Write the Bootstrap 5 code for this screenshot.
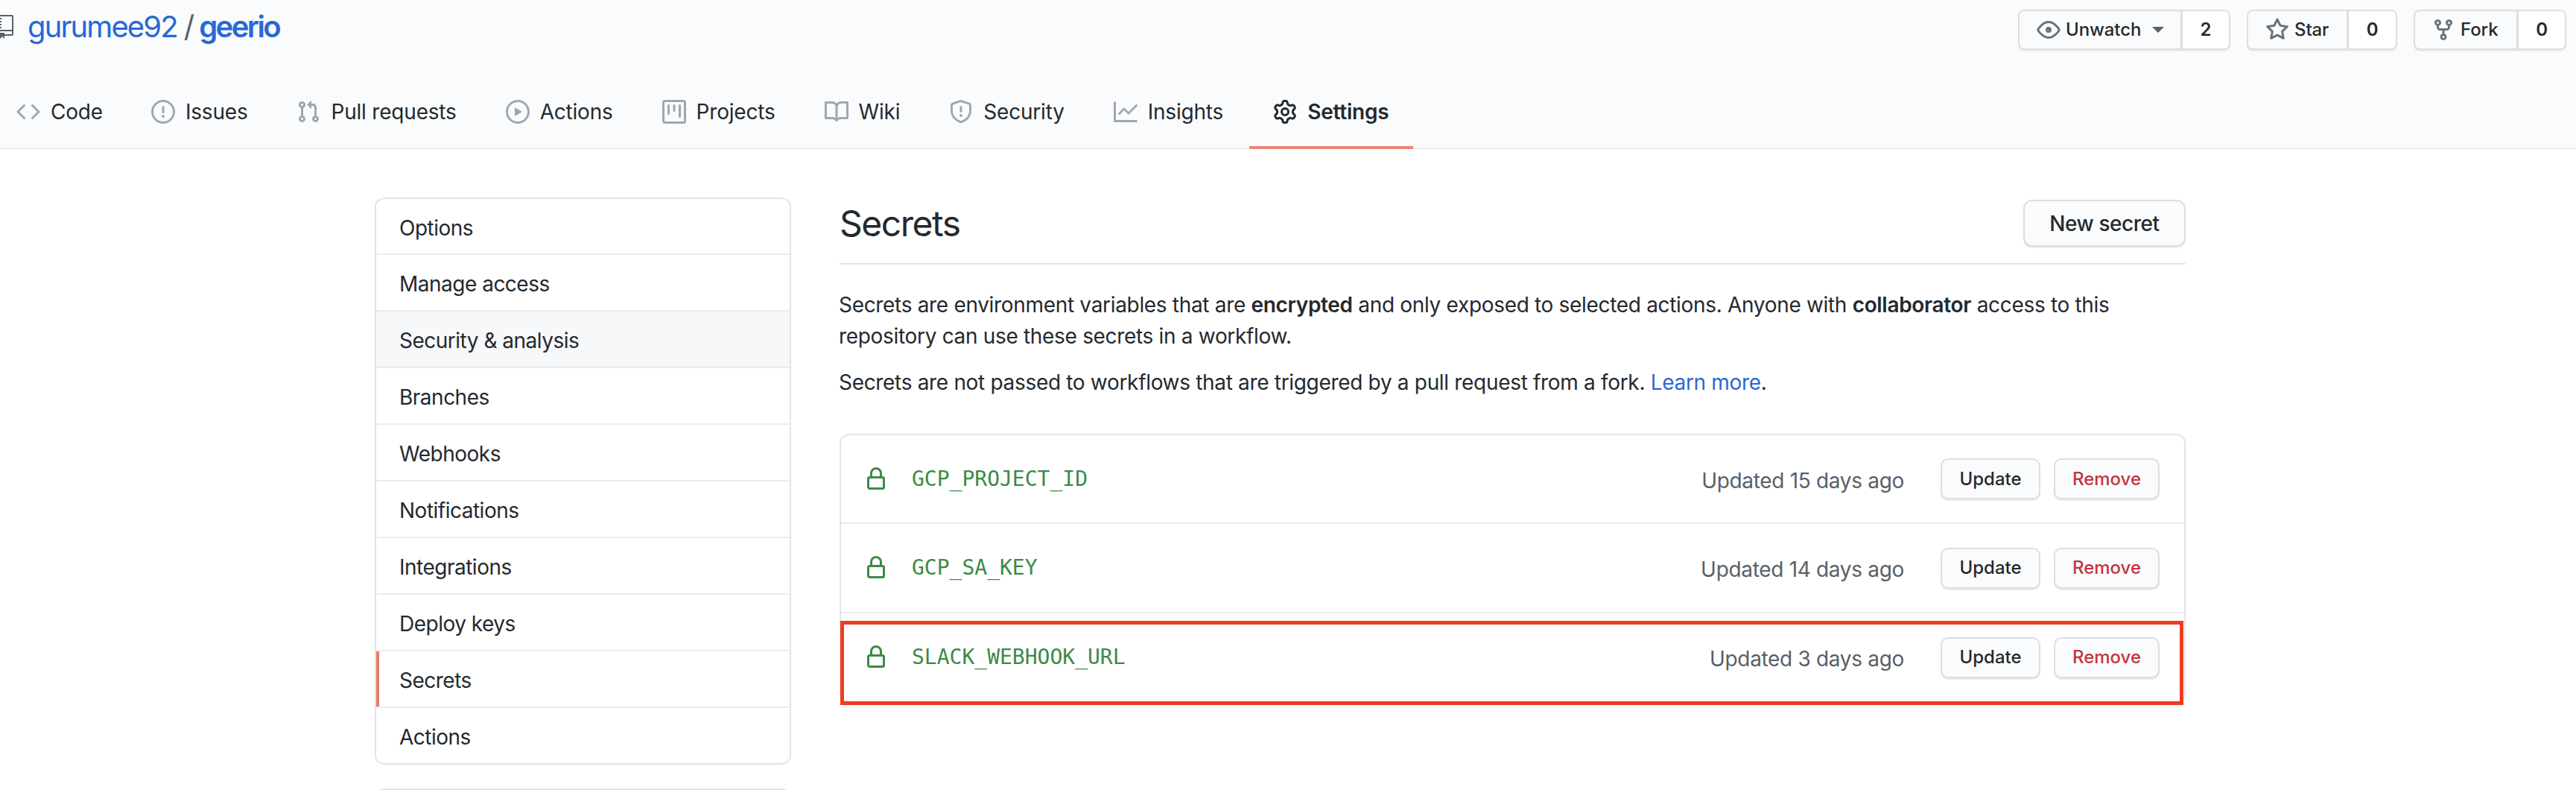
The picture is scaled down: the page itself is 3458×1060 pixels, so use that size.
<!DOCTYPE html>
<html lang="en">
<head>
  <meta charset="UTF-8">
  <title>Secrets · gurumee92/geerio</title>
  <link href="https://cdn.jsdelivr.net/npm/bootstrap@5.3.2/dist/css/bootstrap.min.css" rel="stylesheet">
  <style>
    html, body { height: 1060px; overflow: hidden; }
    body { font-family: Inter, "Noto Sans", sans-serif; font-size: 28px; line-height: 42px; color: #24292e; background: #fff; letter-spacing: -0.32px; }
    a { color: inherit; text-decoration: none; }
    svg { fill: currentColor; fill-rule: evenodd; flex-shrink: 0; display: block; }

    .repo-head { background: #fafbfc; border-bottom: 2px solid #e8eaef; height: 200px; }
    .repo-top { height: 68px; padding: 0 13px 0 0; }
    .repo-path { font-size: 40px; line-height: 48px; margin-top: 12px; color: #586069; letter-spacing: -1.9px; }
    .repo-path svg { margin-left: -6px; margin-right: 19px; color: #586069; }
    .repo-path a { color: #2868d6; }
    .repo-path .sep { margin: 0 8px 0 9px; }
    .repo-name { font-weight: 600; letter-spacing: -2.6px; }

    .act-group { gap: 22px; margin-top: 13px; font-size: 24px; line-height: 30px; font-weight: 500; }
    .act-group .btn { --bs-btn-font-size: 24px; --bs-btn-font-weight: 500; --bs-btn-color: #24292e; --bs-btn-border-width: 2px; --bs-btn-border-color: #dcdee0; --bs-btn-border-radius: 8px; --bs-btn-bg: #fafbfc; --bs-btn-hover-bg: #f3f4f6; --bs-btn-hover-border-color: #dcdee0; --bs-btn-hover-color: #24292e; height: 54px; padding: 0; display: flex; align-items: center; letter-spacing: -0.1px; box-shadow: 0 2px 0 #e9ebee; }
    .act-group .btn svg { color: #6a737d; margin-right: 7px; }
    .act-group .count-btn { --bs-btn-bg: #fff; --bs-btn-hover-bg: #fff; justify-content: center; font-weight: 600; }
    .watch-btn { width: 220px; padding-left: 23px !important; }
    .watch-count { width: 66px; }
    .star-btn { width: 136px; padding-left: 23px !important; }
    .star-count { width: 67px; }
    .fork-btn { width: 140px; padding-left: 22px !important; }
    .fork-count { width: 66px; }
    .caret-down { width: 0; height: 0; border: 8px solid transparent; border-top-color: #586069; border-bottom-width: 0; margin-left: 15px; }

    .repo-tabs { margin-left: -10px; height: 132px; padding-top: 64px; letter-spacing: -0.2px; }
    .repo-tab { height: 68px; padding: 2px 32px 0; margin-right: 2px; display: flex; gap: 14px; align-items: flex-start; border-bottom: 4px solid transparent; white-space: nowrap; }
    .repo-tab:first-child { margin-right: 1px; }
    .repo-tab svg { color: #a0a7af; }
    .repo-tab span { line-height: 32px; }
    .repo-tab.on { font-weight: 600; border-bottom-color: #ed8673; margin-left: 1px; }
    .repo-tab.on svg { color: #24292e; }

    .page-wrap { width: 2431px; margin-left: 503px; padding-top: 65px; gap: 65px; }
    .side-col { width: 559px; flex-shrink: 0; }
    .main-col { flex: 1 1 auto; min-width: 0; }

    .side-menu { --bs-list-group-border-width: 2px; --bs-list-group-border-color: #eaecef; --bs-list-group-border-radius: 12px; --bs-list-group-color: #24292e; letter-spacing: -0.5px; }
    .side-menu { border-left: 2px solid #e1e4e8; border-right: 2px solid #e1e4e8; }
    .side-menu .list-group-item { height: 76px; padding: 4px 31px 0; display: flex; align-items: center; border-left: 0; border-right: 0; }
    .side-menu .list-group-item:first-child { height: 77px; border-top-color: #e1e4e8; }
    .side-menu .list-group-item:last-child { border-bottom-color: #e1e4e8; }
    .side-menu .item-hover { background: #f6f8fa; }
    .side-menu .item-on { box-shadow: inset 4px 0 0 #e57f6b; }
    .side-extra { height: 120px; margin-top: 32px; border: 2px solid #e1e4e8; border-radius: 12px; }

    .sub-head { height: 89px; border-bottom: 2px solid #e1e4e8; margin-bottom: 33px; padding-bottom: 20px; margin-top: 1px; }
    .sub-title { font-size: 48px; line-height: 60px; font-weight: 400; margin: 0; letter-spacing: -1.5px; }
    .gh-btn { --bs-btn-font-size: 28px; --bs-btn-font-weight: 500; --bs-btn-color: #24292e; --bs-btn-bg: #fafbfc; --bs-btn-border-color: #dcdee0; --bs-btn-border-width: 2px; --bs-btn-border-radius: 12px; --bs-btn-hover-bg: #f3f4f6; --bs-btn-hover-color: #24292e; --bs-btn-hover-border-color: #dcdee0; height: 63px; width: 218px; padding: 0; display: flex; align-items: center; justify-content: center; letter-spacing: -0.45px; box-shadow: 0 2px 0 #e9ebee; }
    .intro-text { margin: 0 0 20px -1px; white-space: nowrap; }
    .intro-text strong { font-weight: 600; }
    .intro-text a { color: #2868d6; }

    .secret-wrap { margin-top: 48px; }
    .secret-list { --bs-list-group-border-width: 2px; --bs-list-group-border-color: #eaecef; --bs-list-group-border-radius: 12px; border-left: 2px solid #e1e4e8; border-right: 2px solid #e1e4e8; }
    .secret-list .list-group-item { height: 120px; padding: 0 33px 0 31px; border-left: 0; border-right: 0; display: flex; align-items: center; }
    .secret-list .list-group-item:first-child { height: 121px; border-top-color: #e1e4e8; }
    .secret-list svg { color: #3d8a47; }
    .secret-name { font-family: "DejaVu Sans Mono", "Liberation Mono", monospace; font-size: 28px; letter-spacing: 0; color: #3d8a47; margin-left: 32px; }
    .secret-time { color: #586069; margin-left: auto; margin-right: 49px; margin-top: 4px; }
    .mini-btn { --bs-btn-font-size: 24px; --bs-btn-font-weight: 500; --bs-btn-color: #24292e; --bs-btn-bg: #fafbfc; --bs-btn-border-color: #dcdee0; --bs-btn-border-width: 2px; --bs-btn-border-radius: 10px; --bs-btn-hover-bg: #f3f4f6; --bs-btn-hover-color: #24292e; --bs-btn-hover-border-color: #dcdee0; height: 55px; padding: 0; display: flex; align-items: center; justify-content: center; letter-spacing: 0; box-shadow: 0 2px 0 #e9ebee; }
    .mini-update { width: 134px; }
    .mini-remove { --bs-btn-color: #c5343f; --bs-btn-hover-color: #c5343f; width: 142px; margin-left: 18px; }
    .red-mark { left: 1px; top: 251px; width: 1803px; height: 113px; border: 5px solid #ee3d1f; pointer-events: none; }
  </style>
</head>
<body>

  <div class="repo-head">
    <div class="repo-top d-flex justify-content-between align-items-start">
      <div class="repo-path d-flex align-items-center">
        <svg width="24" height="32" viewBox="0 0 12 16"><path d="M4 9H3V8h1v1zm0-3H3v1h1V6zm0-2H3v1h1V4zm0-2H3v1h1V2zm8-1v12c0 .55-.45 1-1 1H6v2l-1.5-1.5L3 16v-2H1c-.55 0-1-.45-1-1V1c0-.55.45-1 1-1h10c.55 0 1 .45 1 1zm-1 10H1v2h2v-1h3v1h5v-2zm0-10H2v9h9V1z"/></svg>
        <a href="#">gurumee92</a><span class="sep">/</span><a href="#" class="repo-name">geerio</a>
      </div>
      <div class="act-group d-flex">
        <div class="btn-group">
          <a href="#" class="btn watch-btn"><svg width="32" height="32" viewBox="0 0 16 16"><path d="M1.679 7.932c.412-.621 1.242-1.75 2.366-2.717C5.175 4.242 6.527 3.5 8 3.5c1.473 0 2.824.742 3.955 1.715 1.124.967 1.954 2.096 2.366 2.717a.119.119 0 010 .136c-.412.621-1.242 1.75-2.366 2.717C10.825 11.758 9.473 12.5 8 12.5c-1.473 0-2.824-.742-3.955-1.715C2.92 9.818 2.09 8.69 1.679 8.068a.119.119 0 010-.136zM8 2c-1.981 0-3.67.992-4.933 2.078C1.797 5.169.88 6.423.43 7.1a1.619 1.619 0 000 1.798c.45.678 1.367 1.932 2.637 3.024C4.329 13.008 6.019 14 8 14c1.981 0 3.67-.992 4.933-2.078 1.27-1.091 2.187-2.345 2.637-3.023a1.619 1.619 0 000-1.798c-.45-.678-1.367-1.932-2.637-3.023C11.671 2.992 9.981 2 8 2zm0 8a2 2 0 100-4 2 2 0 000 4z"/></svg>Unwatch<i class="caret-down"></i></a>
          <a href="#" class="btn count-btn watch-count">2</a>
        </div>
        <div class="btn-group">
          <a href="#" class="btn star-btn"><svg width="32" height="32" viewBox="0 0 16 16"><path d="M8 .25a.75.75 0 01.673.418l1.882 3.815 4.21.612a.75.75 0 01.416 1.279l-3.046 2.97.719 4.192a.75.75 0 01-1.088.791L8 12.347l-3.766 1.98a.75.75 0 01-1.088-.79l.72-4.194L.818 6.374a.75.75 0 01.416-1.28l4.21-.611L7.327.668A.75.75 0 018 .25zm0 2.445L6.615 5.5a.75.75 0 01-.564.41l-3.097.45 2.24 2.184a.75.75 0 01.216.664l-.528 3.084 2.769-1.456a.75.75 0 01.698 0l2.77 1.456-.53-3.084a.75.75 0 01.216-.664l2.24-2.183-3.096-.45a.75.75 0 01-.564-.41L8 2.694v.001z"/></svg>Star</a>
          <a href="#" class="btn count-btn star-count">0</a>
        </div>
        <div class="btn-group">
          <a href="#" class="btn fork-btn"><svg width="32" height="32" viewBox="0 0 16 16"><path d="M5 3.25a.75.75 0 11-1.5 0 .75.75 0 011.5 0zm0 2.122a2.25 2.25 0 10-1.5 0v.878A2.25 2.25 0 005.75 8.5h1.5v2.128a2.251 2.251 0 101.5 0V8.5h1.5a2.25 2.25 0 002.25-2.25v-.878a2.25 2.25 0 10-1.5 0v.878a.75.75 0 01-.75.75h-4.5A.75.75 0 015 6.25v-.878zm3.75 7.378a.75.75 0 11-1.5 0 .75.75 0 011.5 0zm3-8.75a.75.75 0 100-1.5.75.75 0 000 1.5z"/></svg>Fork</a>
          <a href="#" class="btn count-btn fork-count">0</a>
        </div>
      </div>
    </div>

    <nav class="repo-tabs d-flex">
      <a href="#" class="repo-tab"><svg width="32" height="32" viewBox="0 0 16 16"><path d="M4.72 3.22a.75.75 0 011.06 1.06L2.06 8l3.72 3.72a.75.75 0 11-1.06 1.06L.47 8.53a.75.75 0 010-1.06l4.25-4.25zm6.56 0a.75.75 0 10-1.06 1.06L13.94 8l-3.72 3.72a.75.75 0 101.06 1.06l4.25-4.25a.75.75 0 000-1.06l-4.25-4.25z"/></svg><span>Code</span></a>
      <a href="#" class="repo-tab"><svg width="32" height="32" viewBox="0 0 16 16"><path d="M8 1.5a6.5 6.5 0 100 13 6.5 6.5 0 000-13zM0 8a8 8 0 1116 0A8 8 0 010 8zm9 3a1 1 0 11-2 0 1 1 0 012 0zm-.25-6.25a.75.75 0 00-1.5 0v3.5a.75.75 0 001.5 0v-3.5z"/></svg><span>Issues</span></a>
      <a href="#" class="repo-tab"><svg width="32" height="32" viewBox="0 0 16 16"><path d="M7.177 3.073L9.573.677A.25.25 0 0110 .854v4.792a.25.25 0 01-.427.177L7.177 3.427a.25.25 0 010-.354zM3.75 2.5a.75.75 0 100 1.5.75.75 0 000-1.5zm-2.25.75a2.25 2.25 0 113 2.122v5.256a2.251 2.251 0 11-1.5 0V5.372A2.25 2.25 0 011.5 3.25zM11 2.5h-1V4h1a1 1 0 011 1v5.628a2.251 2.251 0 101.5 0V5A2.5 2.5 0 0011 2.5zm1 10.25a.75.75 0 111.5 0 .75.75 0 01-1.5 0zM3.75 12a.75.75 0 100 1.5.75.75 0 000-1.5z"/></svg><span>Pull requests</span></a>
      <a href="#" class="repo-tab"><svg width="32" height="32" viewBox="0 0 16 16"><path d="M1.5 8a6.5 6.5 0 1113 0 6.5 6.5 0 01-13 0zM8 0a8 8 0 100 16A8 8 0 008 0zM6.379 5.227A.25.25 0 006 5.442v5.117a.25.25 0 00.379.214l4.264-2.559a.25.25 0 000-.428L6.379 5.227z"/></svg><span>Actions</span></a>
      <a href="#" class="repo-tab"><svg width="32" height="32" viewBox="0 0 16 16"><path d="M1.75 0A1.75 1.75 0 000 1.75v12.5C0 15.216.784 16 1.75 16h12.5A1.75 1.75 0 0016 14.25V1.75A1.75 1.75 0 0014.25 0H1.75zM1.5 1.75a.25.25 0 01.25-.25h12.5a.25.25 0 01.25.25v12.5a.25.25 0 01-.25.25H1.75a.25.25 0 01-.25-.25V1.75zM11.75 3a.75.75 0 00-.75.75v7.5a.75.75 0 001.5 0v-7.5a.75.75 0 00-.75-.75zm-8.25.75a.75.75 0 011.5 0v5.5a.75.75 0 01-1.5 0v-5.5zM8 3a.75.75 0 00-.75.75v3.5a.75.75 0 001.5 0v-3.5A.75.75 0 008 3z"/></svg><span>Projects</span></a>
      <a href="#" class="repo-tab"><svg width="32" height="32" viewBox="0 0 16 16"><path d="M0 1.75A.75.75 0 01.75 1h4.253c1.227 0 2.317.59 3 1.501A3.744 3.744 0 0111.006 1h4.245a.75.75 0 01.75.75v10.5a.75.75 0 01-.75.75h-4.507a2.25 2.25 0 00-1.591.659l-.622.621a.75.75 0 01-1.06 0l-.622-.621A2.25 2.25 0 005.258 13H.75a.75.75 0 01-.75-.75V1.75zm8.755 3a2.25 2.25 0 012.25-2.25H14.5v9h-3.757c-.71 0-1.4.201-1.992.572l.004-7.322zm-1.504 7.324l.004-5.073-.002-2.253A2.25 2.25 0 005.003 2.5H1.5v9h3.757a3.75 3.75 0 011.994.574z"/></svg><span>Wiki</span></a>
      <a href="#" class="repo-tab"><svg width="32" height="32" viewBox="0 0 16 16"><path d="M7.467.133a1.75 1.75 0 011.066 0l5.25 1.68A1.75 1.75 0 0115 3.48V7c0 1.566-.32 3.182-1.303 4.682-.983 1.498-2.585 2.813-5.032 3.855a1.7 1.7 0 01-1.33 0c-2.447-1.042-4.049-2.357-5.032-3.855C1.32 10.182 1 8.566 1 7V3.48a1.75 1.75 0 011.217-1.667l5.25-1.68zm.61 1.429a.25.25 0 00-.153 0l-5.25 1.68a.25.25 0 00-.174.238V7c0 1.358.275 2.666 1.057 3.86.784 1.194 2.121 2.34 4.366 3.297a.2.2 0 00.154 0c2.245-.956 3.582-2.104 4.366-3.298C13.225 9.666 13.5 8.36 13.5 7V3.48a.25.25 0 00-.174-.237l-5.25-1.68zM9 10.5a1 1 0 11-2 0 1 1 0 012 0zm-.25-5.75a.75.75 0 10-1.5 0v3a.75.75 0 001.5 0v-3z"/></svg><span>Security</span></a>
      <a href="#" class="repo-tab"><svg width="32" height="32" viewBox="0 0 16 16"><path d="M1.5 1.75a.75.75 0 00-1.5 0v12.5c0 .414.336.75.75.75h14.5a.75.75 0 000-1.5H1.5V1.75zm14.28 2.53a.75.75 0 00-1.06-1.06L10 7.94 7.53 5.47a.75.75 0 00-1.06 0L3.22 8.72a.75.75 0 001.06 1.06L7 7.06l2.47 2.47a.75.75 0 001.06 0l5.25-5.25z"/></svg><span>Insights</span></a>
      <a href="#" class="repo-tab on"><svg width="32" height="32" viewBox="0 0 16 16"><path d="M7.429 1.525a6.593 6.593 0 011.142 0c.036.003.108.036.137.146l.289 1.105c.147.56.55.967.997 1.189.174.086.341.183.501.29.417.278.97.423 1.53.27l1.102-.303c.11-.03.175.016.195.046.219.31.41.641.573.989.014.031.022.11-.059.19l-.815.806c-.411.406-.562.957-.53 1.456a4.588 4.588 0 010 .582c-.032.499.119 1.05.53 1.456l.815.806c.08.08.073.159.059.19a6.494 6.494 0 01-.573.99c-.02.029-.086.074-.195.045l-1.103-.303c-.559-.153-1.112-.008-1.529.27-.16.107-.327.204-.5.29-.449.222-.851.628-.998 1.189l-.289 1.105c-.029.11-.101.143-.137.146a6.613 6.613 0 01-1.142 0c-.036-.003-.108-.037-.137-.146l-.289-1.105c-.147-.56-.55-.967-.997-1.189a4.502 4.502 0 01-.501-.29c-.417-.278-.97-.423-1.53-.27l-1.102.303c-.11.03-.175-.016-.195-.046a6.492 6.492 0 01-.573-.989c-.014-.031-.022-.11.059-.19l.815-.806c.411-.406.562-.957.53-1.456a4.587 4.587 0 010-.582c.032-.499-.119-1.05-.53-1.456l-.815-.806c-.08-.08-.073-.159-.059-.19a6.44 6.44 0 01.573-.99c.02-.029.086-.075.195-.045l1.103.303c.559.153 1.112.008 1.529-.27.16-.107.327-.204.5-.29.449-.222.851-.628.998-1.189l.289-1.105c.029-.11.101-.143.137-.146zM8 0c-.236 0-.47.01-.701.03-.743.065-1.29.615-1.458 1.261l-.29 1.106c-.017.066-.078.158-.211.224a5.994 5.994 0 00-.668.386c-.123.082-.233.09-.3.071L3.27 2.776c-.644-.177-1.392.02-1.82.63a7.977 7.977 0 00-.704 1.217c-.315.675-.111 1.422.363 1.891l.815.806c.05.048.098.147.088.294a6.084 6.084 0 000 .772c.01.147-.038.246-.088.294l-.815.806c-.474.469-.678 1.216-.363 1.891.2.428.436.835.704 1.218.428.609 1.176.806 1.82.63l1.103-.303c.066-.019.176-.011.299.071.213.143.436.272.668.386.133.066.194.158.212.224l.289 1.106c.169.646.715 1.196 1.458 1.26a8.094 8.094 0 001.402 0c.743-.064 1.29-.614 1.458-1.26l.29-1.106c.017-.066.078-.158.211-.224a5.98 5.98 0 00.668-.386c.123-.082.233-.09.3-.071l1.102.302c.644.177 1.392-.02 1.82-.63.268-.382.505-.789.704-1.217.315-.675.111-1.422-.364-1.891l-.814-.806c-.05-.048-.098-.147-.088-.294a6.1 6.1 0 000-.772c-.01-.147.039-.246.088-.294l.814-.806c.475-.469.679-1.216.364-1.891a7.992 7.992 0 00-.704-1.218c-.428-.609-1.176-.806-1.82-.63l-1.103.303c-.066.019-.176.011-.299-.071a5.991 5.991 0 00-.668-.386c-.133-.066-.194-.158-.212-.224L10.16 1.29C9.99.645 9.444.095 8.701.031A8.094 8.094 0 008 0zm1.5 8a1.5 1.5 0 11-3 0 1.5 1.5 0 013 0zM11 8a3 3 0 11-6 0 3 3 0 016 0z"/></svg><span>Settings</span></a>
    </nav>
  </div>

  <div class="page-wrap d-flex">
    <div class="side-col">
      <div class="list-group side-menu">
        <a href="#" class="list-group-item">Options</a>
        <a href="#" class="list-group-item">Manage access</a>
        <a href="#" class="list-group-item item-hover">Security &amp; analysis</a>
        <a href="#" class="list-group-item">Branches</a>
        <a href="#" class="list-group-item">Webhooks</a>
        <a href="#" class="list-group-item">Notifications</a>
        <a href="#" class="list-group-item">Integrations</a>
        <a href="#" class="list-group-item">Deploy keys</a>
        <a href="#" class="list-group-item item-on">Secrets</a>
        <a href="#" class="list-group-item">Actions</a>
      </div>
      <div class="side-extra"></div>
    </div>

    <div class="main-col">
      <div class="sub-head d-flex justify-content-between align-items-center">
        <h2 class="sub-title">Secrets</h2>
        <a href="#" class="btn gh-btn">New secret</a>
      </div>
      <p class="intro-text">Secrets are environment variables that are <strong>encrypted</strong> and only exposed to selected actions. Anyone with <strong>collaborator</strong> access to this<br>repository can use these secrets in a workflow.</p>
      <p class="intro-text">Secrets are not passed to workflows that are triggered by a pull request from a fork. <a href="#">Learn more</a>.</p>

      <div class="secret-wrap position-relative">
        <ul class="list-group secret-list">
          <li class="list-group-item">
            <svg width="32" height="32" viewBox="0 0 16 16"><path d="M4 4v2h-.25A1.75 1.75 0 002 7.75v5.5c0 .966.784 1.75 1.75 1.75h8.5A1.75 1.75 0 0014 13.25v-5.5A1.75 1.75 0 0012.25 6H12V4a4 4 0 10-8 0zm6.5 2V4a2.5 2.5 0 00-5 0v2h5zM12 7.5h.25a.25.25 0 01.25.25v5.5a.25.25 0 01-.25.25h-8.5a.25.25 0 01-.25-.25v-5.5a.25.25 0 01.25-.25H12z"/></svg>
            <code class="secret-name">GCP_PROJECT_ID</code>
            <span class="secret-time">Updated 15 days ago</span>
            <a href="#" class="btn mini-btn mini-update">Update</a>
            <a href="#" class="btn mini-btn mini-remove">Remove</a>
          </li>
          <li class="list-group-item">
            <svg width="32" height="32" viewBox="0 0 16 16"><path d="M4 4v2h-.25A1.75 1.75 0 002 7.75v5.5c0 .966.784 1.75 1.75 1.75h8.5A1.75 1.75 0 0014 13.25v-5.5A1.75 1.75 0 0012.25 6H12V4a4 4 0 10-8 0zm6.5 2V4a2.5 2.5 0 00-5 0v2h5zM12 7.5h.25a.25.25 0 01.25.25v5.5a.25.25 0 01-.25.25h-8.5a.25.25 0 01-.25-.25v-5.5a.25.25 0 01.25-.25H12z"/></svg>
            <code class="secret-name">GCP_SA_KEY</code>
            <span class="secret-time">Updated 14 days ago</span>
            <a href="#" class="btn mini-btn mini-update">Update</a>
            <a href="#" class="btn mini-btn mini-remove">Remove</a>
          </li>
          <li class="list-group-item">
            <svg width="32" height="32" viewBox="0 0 16 16"><path d="M4 4v2h-.25A1.75 1.75 0 002 7.75v5.5c0 .966.784 1.75 1.75 1.75h8.5A1.75 1.75 0 0014 13.25v-5.5A1.75 1.75 0 0012.25 6H12V4a4 4 0 10-8 0zm6.5 2V4a2.5 2.5 0 00-5 0v2h5zM12 7.5h.25a.25.25 0 01.25.25v5.5a.25.25 0 01-.25.25h-8.5a.25.25 0 01-.25-.25v-5.5a.25.25 0 01.25-.25H12z"/></svg>
            <code class="secret-name">SLACK_WEBHOOK_URL</code>
            <span class="secret-time">Updated 3 days ago</span>
            <a href="#" class="btn mini-btn mini-update">Update</a>
            <a href="#" class="btn mini-btn mini-remove">Remove</a>
          </li>
        </ul>
        <div class="red-mark position-absolute"></div>
      </div>
    </div>
  </div>

</body>
</html>
